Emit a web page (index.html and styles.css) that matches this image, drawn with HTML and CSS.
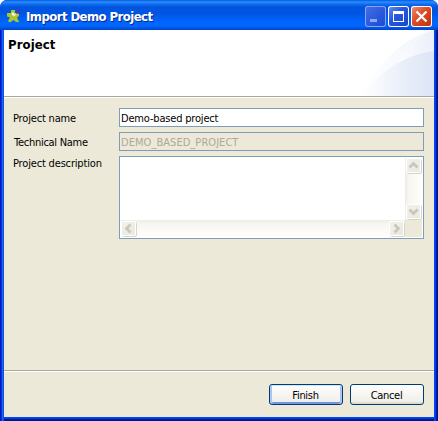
FILE: index.html
```html
<!DOCTYPE html>
<html lang="en">
<head>
<meta charset="utf-8">
<title>Import Demo Project</title>
<link rel="stylesheet" href="styles.css">
</head>
<body>
<div class="window">
  <div class="titlebar">
    <svg class="app-icon" width="16" height="16" viewBox="0 0 16 16">
      <path d="M5 2H9V5L13 6V8L11 9.500L13 14H10L7.500 12L4 14.500L2 13L4 9.500L1 8.500V5H5Z" fill="#a9c92b"/>
      <path d="M5.500 4.500L8.500 5L8 8L6 7Z" fill="#fff8dc"/>
      <path d="M7.500 8L11 5" stroke="#f0e4d8" stroke-width="1.500"/>
      <path d="M10 5.500L15 1M11 2L14 4.500" stroke="#5a2bb5" stroke-width="1.600"/>
    </svg>
    <h1 class="title">Import Demo Project</h1>
    <div class="controls">
      <span class="control minimize"><svg width="21" height="21"><path d="M5 13h7v3H5z" fill="#8fa6f2"/></svg></span>
      <span class="control maximize"><svg width="21" height="21"><path d="M5 5h11v11H5zM6 8v7h9V8z" fill="#fff" fill-rule="evenodd"/></svg></span>
      <span class="control close"><svg width="21" height="21"><path d="M5.500 5.500l10 10M15.500 5.500l-10 10" stroke="#fff" stroke-width="2.300"/></svg></span>
    </div>
  </div>
  <div class="client">
    <div class="banner">
      <h2 class="heading">Project</h2>
      <svg class="swoosh" width="74" height="66" viewBox="0 0 74 66">
        <defs>
          <linearGradient id="outer"><stop offset="0" stop-color="#fff"/><stop offset="1" stop-color="#e8eef9"/></linearGradient>
          <linearGradient id="inner"><stop offset="0" stop-color="#fff"/><stop offset=".5" stop-color="#ebf0fa"/><stop offset="1" stop-color="#dce4f5"/></linearGradient>
        </defs>
        <path d="M2 66C15 36 40 9 74 0V66Z" fill="url(#outer)" opacity=".7"/>
        <path d="M36 35C46 20 58 7 74 0V66H36Z" fill="url(#outer)" opacity=".7"/>
        <path d="M2 66C18 43 43 25 74 21V66Z" fill="url(#inner)"/>
      </svg>
    </div>
    <div class="form">
      <span class="label name-label">Project name</span>
      <div class="field"><span class="name-value">Demo-based project</span></div>
      <span class="label tech-label">Technical Name</span>
      <div class="field disabled"><span class="tech-value">DEMO_BASED_PROJECT</span></div>
      <span class="label desc-label">Project description</span>
      <div class="textarea">
        <div class="paper"></div>
        <div class="scroll vertical">
          <span class="arrow"><svg width="15" height="15"><path d="M3.500 9.500l4-4 4 4" /></svg></span>
          <span class="arrow"><svg width="15" height="15"><path d="M3.500 5.500l4 4 4-4" /></svg></span>
        </div>
        <div class="scroll horizontal">
          <span class="arrow"><svg width="15" height="15"><path d="M9.500 3.500l-4 4 4 4" /></svg></span>
          <span class="arrow"><svg width="15" height="15"><path d="M5.500 3.500l4 4-4 4" /></svg></span>
        </div>
      </div>
    </div>
    <div class="actions">
      <div class="button default"><span>Finish</span></div>
      <div class="button"><span>Cancel</span></div>
    </div>
  </div>
</div>
</body>
</html>
```

FILE: styles.css
```css
* { box-sizing: border-box; }
body {
  margin: 0;
  background: #fff;
  font: 11px/13px "DejaVu Sans Condensed", "DejaVu Sans", sans-serif;
  color: #000;
}
svg { display: block; }
h1, h2 { margin: 0; }
span { white-space: nowrap; }
.window {
  width: 438px;
  height: 421px;
  padding: 0 4px 4px;
  border-radius: 7px 7px 0 0;
  overflow: hidden;
  background:
    linear-gradient(to right, #0019cf 0 1px, #0831d9 1px 2px, #166aee 2px 3px, #0855dd 3px 4px, transparent 4px) 0 30px no-repeat,
    linear-gradient(to left, #00138c 0 1px, #001da0 1px 2px, #003ddc 2px 3px, #0048f1 3px 4px, transparent 4px) 0 30px no-repeat,
    linear-gradient(to top, #00138c 0 1px, #001da0 1px 2px, #003ddc 2px 3px, #0048f1 3px 4px, transparent 4px),
    #0058e6;
}
.titlebar {
  height: 30px;
  margin: 0 -4px;
  padding: 2px 6px 0 5px;
  display: flex;
  align-items: center;
  background: linear-gradient(#0058e6 0, #2b8dfb 2px, #1270ee 4px, #0055df 7px, #0056e4 14px, #0064fa 21px, #0066ff 26px, #0054e1 28px, #0143ce 30px);
}
.app-icon { margin-left: 1px; }
.title {
  flex: 1;
  padding: 1px 0 0 4px;
  font: bold 13px/16px "DejaVu Sans Condensed", sans-serif;
  color: #fff;
  text-shadow: 1px 1px #0a2a8a;
  letter-spacing: -.56px;
  white-space: nowrap;
}
.controls { display: flex; gap: 2px; }
.control {
  width: 21px;
  height: 21px;
  border-radius: 3px;
  box-shadow: inset 0 0 0 1px #fff;
  background: linear-gradient(135deg, #6c93f3, #2858e0 40%, #1745c8);
}
.minimize { box-shadow: inset 0 0 0 1px #8ca4ef; background: linear-gradient(135deg, #4470e4, #2857dc 60%, #1b4bd0); }
.close { background: linear-gradient(135deg, #f09078, #dc4b24 45%, #bd3209); }
.client {
  height: 387px;
  display: flex;
  flex-direction: column;
  background: #ece9d8;
}
.banner {
  height: 68px;
  display: flex;
  justify-content: space-between;
  background: #fff;
  border-bottom: 1px solid #fff;
  box-shadow: inset 0 -1px #aca899;
}
.heading {
  padding: 7px 0 0 4px;
  font: bold 13px/15px "DejaVu Sans Condensed", sans-serif;
  letter-spacing: .1px;
}
.form {
  flex: 1;
  display: grid;
  grid-template-columns: 106px 305px;
  grid-template-rows: 19px 19px 83px;
  row-gap: 5px;
  padding: 10px 0 0 9px;
}
.label { padding-top: 4px; letter-spacing: -.17px; }
.tech-label { padding-left: 1px; letter-spacing: -.27px; }
.desc-label { padding-top: 1px; }
.field {
  padding: 3px 0 0 1px;
  border: 1px solid #7f9db9;
  background: #fff;
}
.name-value { letter-spacing: -.18px; }
.tech-value { letter-spacing: .05px; }
.disabled { background: #ece9d8; color: #aca899; }
.textarea {
  display: grid;
  grid-template-columns: 1fr 17px;
  grid-template-rows: 1fr 17px;
  padding: 1px;
  border: 1px solid #7f9db9;
  background: linear-gradient(#ece9d8, #ece9d8) calc(100% - 1px) calc(100% - 1px) / 17px 17px no-repeat #fff;
}
.scroll { display: flex; justify-content: space-between; }
.vertical {
  flex-direction: column;
  padding: 0 1px 1px;
  background: linear-gradient(to right, #eeede5, #f7f6f2 4px, #fefefb);
}
.horizontal {
  padding: 1px 1px 1px 0;
  background: linear-gradient(#eeede5, #f7f6f2 4px, #fefefb);
}
.arrow {
  width: 15px;
  height: 15px;
  border-radius: 2px;
  background: linear-gradient(135deg, #f3f2ec, #e7e6df);
  box-shadow: inset 0 0 0 1px #fff, 1px 1px #d7d5c8;
}
.arrow path { fill: none; stroke: #c9c7ba; stroke-width: 2.700; }
.actions {
  height: 47px;
  display: flex;
  justify-content: flex-end;
  gap: 7px;
  padding: 13px 10px 0 0;
  border-top: 1px solid #aca899;
  box-shadow: inset 0 1px #fff;
}
.button {
  width: 74px;
  height: 21px;
  padding: 4px 1px 0 0;
  border: 1px solid #003c74;
  border-radius: 3px;
  background: linear-gradient(#fff, #f6f5f0 50%, #f0f0ea 85%, #d8d2c6);
  text-align: center;
  letter-spacing: -.3px;
}
.default { box-shadow: inset 0 1px #cee7ff, inset 2px 0 #adc5f2, inset -2px 0 #adc5f2, inset 0 -2px #7595de; }
```
